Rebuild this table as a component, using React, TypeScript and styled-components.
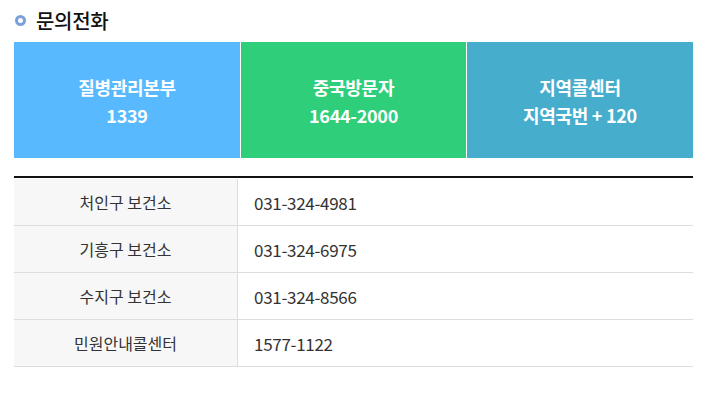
import React from 'react';
import styled, { createGlobalStyle } from 'styled-components';

const GlobalStyle = createGlobalStyle`
  body {
    margin: 0;
    background: #ffffff;
    font-family: "Noto Sans CJK KR", "Noto Sans", sans-serif;
  }
`;

const Section = styled.section`
  width: 679px;
  padding: 7px 0 0 14px;
`;

const Heading = styled.h2`
  display: flex;
  align-items: center;
  gap: 10px;
  margin: 0 0 9px;
  height: 26px;
  font-size: 20px;
  font-weight: 500;
  color: #111;
  letter-spacing: -0.3px;
`;

const Bullet = styled.span`
  width: 5px;
  height: 5px;
  margin-left: 1px;
  border-radius: 50%;
  border: 3.5px solid #7b9fd9;
  background: #fff;
`;

const CardRow = styled.div`
  display: grid;
  grid-template-columns: 226px 225px 226px;
  gap: 1px;
  height: 116px;
`;

const Card = styled.div<{ $bg: string }>`
  background: ${(p) => p.$bg};
  color: #fff;
  display: flex;
  flex-direction: column;
  align-items: center;
  justify-content: center;
  font-size: 18px;
  font-weight: 700;
  line-height: 28px;
  letter-spacing: -0.3px;
  padding-top: 1px;
`;

const Table = styled.div`
  margin-top: 18px;
  border-top: 2px solid #111;
  padding-top: 1px;
`;

const Row = styled.div`
  display: grid;
  grid-template-columns: 224px 1fr;
  height: 46px;
  border-bottom: 1px solid #dddddd;
  font-size: 16px;
  color: #333;
`;

const Label = styled.div`
  background: #f7f7f7;
  border-right: 1px solid #dddddd;
  display: flex;
  align-items: center;
  justify-content: center;
`;

const Value = styled.div`
  display: flex;
  align-items: center;
  padding-left: 16px;
  font-size: 17px;
  letter-spacing: -0.3px;
`;

const cards = [
  { bg: '#58b9ff', title: '질병관리본부', num: '1339' },
  { bg: '#2ece7a', title: '중국방문자', num: '1644-2000' },
  { bg: '#46adcd', title: '지역콜센터', num: '지역국번 + 120' },
];

const rows = [
  ['처인구 보건소', '031-324-4981'],
  ['기흥구 보건소', '031-324-6975'],
  ['수지구 보건소', '031-324-8566'],
  ['민원안내콜센터', '1577-1122'],
];

const App: React.FC = () => {
  return (
    <>
      <GlobalStyle />
      <Section>
        <Heading>
          <Bullet />
          문의전화
        </Heading>
        <CardRow>
          {cards.map((c) => (
            <Card key={c.title} $bg={c.bg}>
              <span>{c.title}</span>
              <span>{c.num}</span>
            </Card>
          ))}
        </CardRow>
        <Table>
          {rows.map(([label, value]) => (
            <Row key={label}>
              <Label>{label}</Label>
              <Value>{value}</Value>
            </Row>
          ))}
        </Table>
      </Section>
    </>
  );
};

export default App;
